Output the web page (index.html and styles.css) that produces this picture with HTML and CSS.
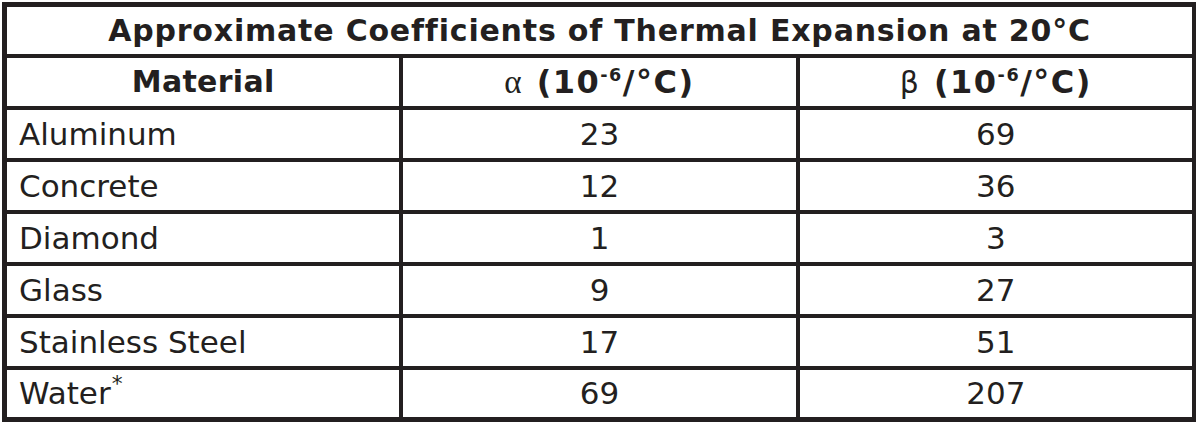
FILE: index.html
```html
<!DOCTYPE html>
<html lang="en">
<head>
    <meta charset="UTF-8">
    <title>Thermal Expansion</title>
    <link rel="stylesheet" href="styles.css">
</head>
<body>
    <table class="tabla">
        <tr class="titulo">
            <th colspan="3">Approximate Coefficients of Thermal Expansion at 20°C</th>
        </tr>
        <tr class="cabecera">
            <th>Material</th>
            <th><span class="griega alfa">α</span> <span class="unidad">(10<sup>-6</sup>/°C)</span></th>
            <th><span class="griega">β</span> <span class="unidad">(10<sup>-6</sup>/°C)</span></th>
        </tr>
        <tr><td>Aluminum</td><td>23</td><td>69</td></tr>
        <tr><td>Concrete</td><td>12</td><td>36</td></tr>
        <tr><td>Diamond</td><td>1</td><td>3</td></tr>
        <tr><td>Glass</td><td>9</td><td>27</td></tr>
        <tr><td>Stainless Steel</td><td>17</td><td>51</td></tr>
        <tr class="corta"><td>Water<sup class="nota">*</sup></td><td>69</td><td>207</td></tr>
    </table>
</body>
</html>
```

FILE: styles.css
```css
body {
    margin: 2px;
    background: #fff;
    font-family: "DejaVu Sans", Verdana, sans-serif;
    color: #231f20;
}

/* la tabla usa el fondo oscuro como lineas */
.tabla {
    width: 1195px;
    border: 1px solid #231f20;
    border-spacing: 4px;
    background: #231f20;
    table-layout: fixed;
}

.tabla th,
.tabla td {
    background: #fff;
    height: 48px;
    padding: 0;
    font-size: 31px;
    text-align: center;
    vertical-align: middle;
    line-height: 1;
}

.tabla th {
    font-size: 30px;
    letter-spacing: 0.3px;
}

.tabla td:first-child {
    text-align: left;
    padding-left: 12px;
}

.titulo th {
    height: 47px;
    font-size: 30px;
    letter-spacing: 0.8px;
}

.corta td {
    height: 47px;
}

.griega {
    font-weight: normal;
    margin-right: 4px;
}

.alfa {
    font-family: "Liberation Serif", serif;
    font-size: 33px;
}

.unidad {
    font-size: 32px;
    letter-spacing: 1.5px;
}

sup {
    font-size: 0.55em;
    vertical-align: 0.7em;
    line-height: 0;
}

.nota {
    font-size: 0.7em;
    vertical-align: 0.6em;
    margin-left: 1px;
}
```
